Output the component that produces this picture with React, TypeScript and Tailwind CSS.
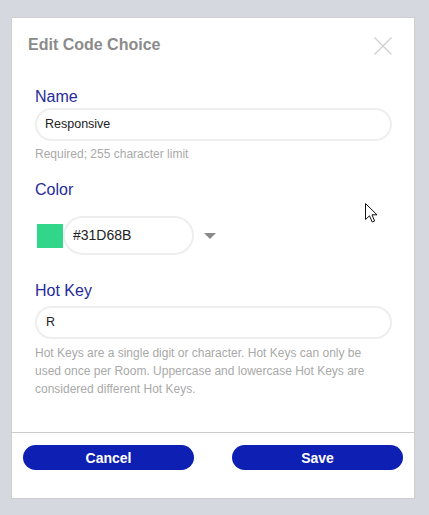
import React from "react";

function Cursor() {
  return (
    <svg
      className="absolute left-[365px] top-[203px]"
      width="13"
      height="20"
      viewBox="0 0 13 20"
    >
      <path
        d="M0.5 0.5 L0.5 16.5 L4.5 12.8 L7.2 19 L9.6 18 L7 11.8 L12 11.8 Z"
        fill="#ffffff"
        stroke="#111111"
        strokeWidth="1"
        strokeLinejoin="miter"
      />
    </svg>
  );
}

export default function App() {
  return (
    <div
      className="relative w-[429px] h-[515px] overflow-hidden bg-[#d5d8df] pt-[17px] pl-[11px]"
      style={{ fontFamily: '"Liberation Sans", Arial, sans-serif' }}
    >
      <div className="w-[404px] h-[482px] bg-white border border-[#cfcfcf] flex flex-col">
        {/* Header */}
        <div className="flex items-start justify-between pt-[17px] pl-[16px] pr-[22px]">
          <h1 className="text-[16px] leading-[20px] font-bold text-[#8b8b8b]">
            Edit Code Choice
          </h1>
          <svg className="mt-[2px]" width="18" height="18" viewBox="0 0 18 18">
            <path
              d="M0.5 0.5 L17.5 17.5 M17.5 0.5 L0.5 17.5"
              stroke="#cfcfcf"
              strokeWidth="1.3"
            />
          </svg>
        </div>

        {/* Body */}
        <div className="flex-1 pl-[23px] pr-[22px]">
          <div className="mt-[32px] text-[16px] leading-[20px] text-[#262b9c]">Name</div>
          <div className="mt-[1px] h-[33px] rounded-full border-2 border-[#eeeeee] flex items-center pl-[8px] text-[12.5px] text-[#222222]">
            Responsive
          </div>
          <div className="mt-[5px] text-[12px] leading-[16px] text-[#a9a9a9]">
            Required; 255 character limit
          </div>

          <div className="mt-[18px] text-[16px] leading-[20px] text-[#262b9c]">Color</div>
          <div className="mt-[16px] flex items-center">
            <div className="ml-[2px] w-[26px] h-[24px] bg-[#31D68B]" />
            <div className="w-[131px] h-[39px] rounded-full border-2 border-[#eeeeee] flex items-center pl-[8px] text-[14px] text-[#222222]">
              #31D68B
            </div>
            <svg className="ml-[10px]" width="12" height="6" viewBox="0 0 12 6">
              <path d="M0 0 L12 0 L6 6 Z" fill="#8a8a8a" />
            </svg>
          </div>

          <div className="mt-[26px] text-[16px] leading-[20px] text-[#262b9c]">Hot Key</div>
          <div className="mt-[5px] h-[33px] rounded-full border-2 border-[#eeeeee] flex items-center pl-[9px] text-[12.5px] text-[#222222]">
            R
          </div>
          <div className="mt-[5px] text-[12px] leading-[18px] text-[#a9a9a9] pr-[20px]">
            Hot Keys are a single digit or character. Hot Keys can only be used once per Room.
            Uppercase and lowercase Hot Keys are considered different Hot Keys.
          </div>
        </div>

        {/* Footer */}
        <div className="h-[66px] border-t border-[#cccccc] pt-[12px] px-[11px] flex justify-between items-start">
          <button className="w-[171px] h-[25px] rounded-full bg-[#0e1fb3] text-white text-[14px] font-bold leading-none flex items-center justify-center">
            Cancel
          </button>
          <button className="w-[171px] h-[25px] rounded-full bg-[#0e1fb3] text-white text-[14px] font-bold leading-none flex items-center justify-center">
            Save
          </button>
        </div>
      </div>
      <Cursor />
    </div>
  );
}
